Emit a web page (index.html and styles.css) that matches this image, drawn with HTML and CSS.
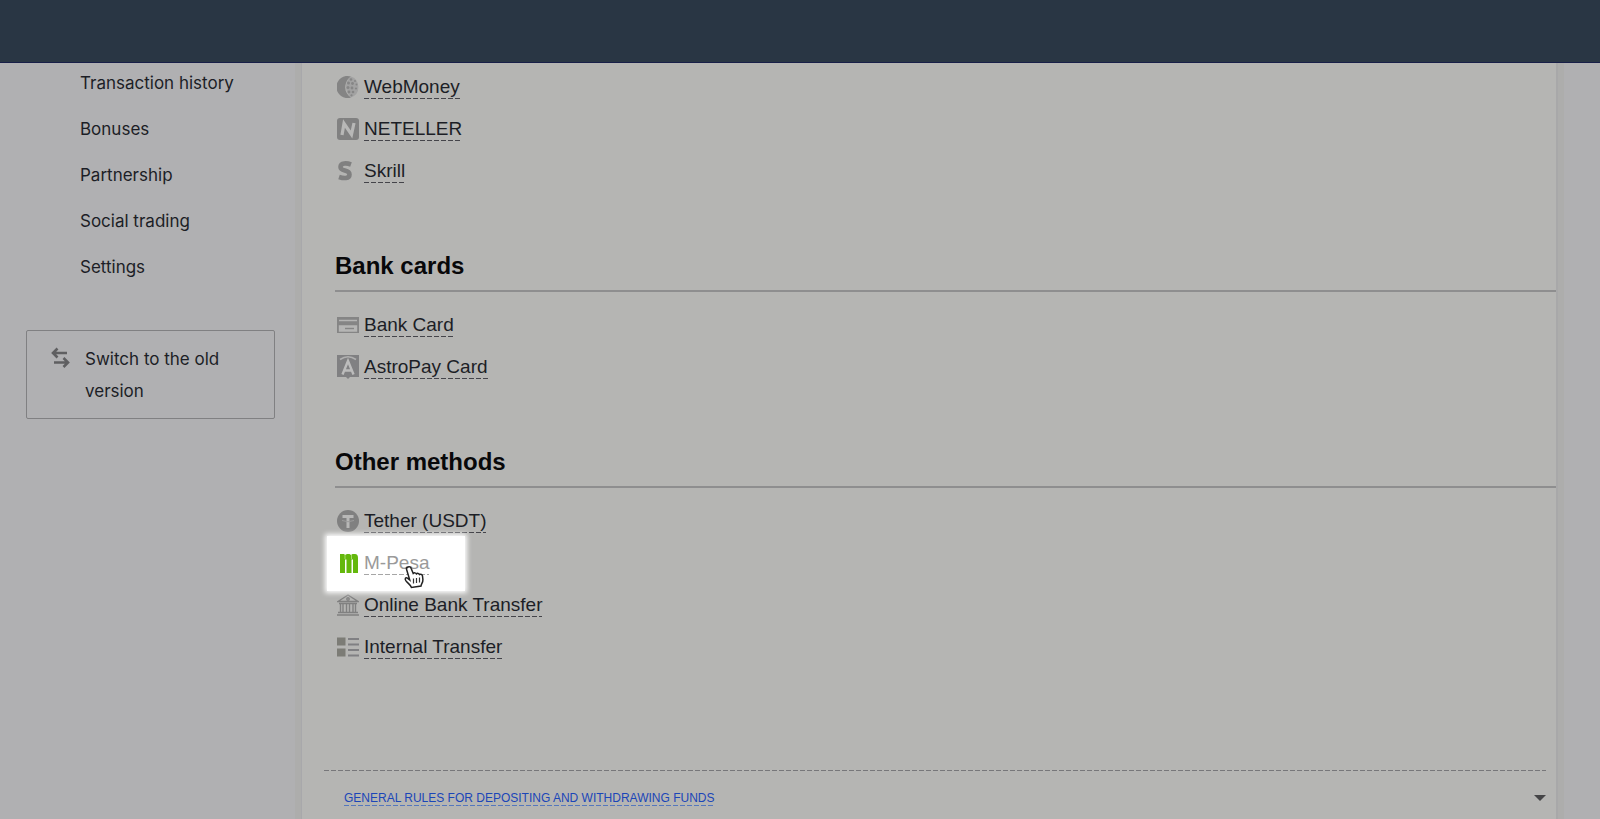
FILE: index.html
```html
<!DOCTYPE html>
<html lang="en">
<head>
<meta charset="UTF-8">
<meta name="viewport" content="width=device-width, initial-scale=1.0">
<title>Deposit</title>
<link rel="stylesheet" href="styles.css">
</head>
<body>

<header class="topbar"></header>

<div class="page">
    <aside class="sidebar">
        <nav>
            <ul class="menu">
                <li><a href="#">Transaction history</a></li>
                <li><a href="#">Bonuses</a></li>
                <li><a href="#">Partnership</a></li>
                <li><a href="#">Social trading</a></li>
                <li><a href="#">Settings</a></li>
            </ul>
        </nav>
        <button class="switch" type="button">
            <svg width="20" height="22" viewBox="0 0 20 22" fill="none" stroke="#5f5f61" stroke-width="2.6"><path d="M16 6H2M6.500 1.500L2 6l4.500 4.500M3 15.500h14M12.500 11l4.500 4.500-4.500 4.500"/></svg>
            <span>Switch to the old version</span>
        </button>
    </aside>

    <main class="content">
        <section class="group">
            <ul class="methods">
                <li>
                    <svg width="22" height="22" viewBox="0 0 22 22"><path d="M14 .6A11 11 0 1 0 14 21.400C9 18 7 13 9 7c1-3 3-5 5-6.400z" fill="#848484"/><path d="M14 .6C9 4 6 14 14 21.400A11 11 0 0 0 14 .6z" fill="#a2a2a2"/><g fill="#868686"><circle cx="14" cy="3.500" r="1.300"/><circle cx="18" cy="5" r="1"/><circle cx="11.500" cy="7" r="1.500"/><circle cx="15.500" cy="7.500" r="1.400"/><circle cx="19.500" cy="8.500" r="1"/><circle cx="11" cy="11.500" r="1.500"/><circle cx="15" cy="12" r="1.400"/><circle cx="19" cy="12.500" r="1.100"/><circle cx="12" cy="16" r="1.400"/><circle cx="16" cy="16" r="1.300"/><circle cx="14.500" cy="19.300" r="1.100"/></g></svg>
                    <a href="#">WebMoney</a>
                </li>
                <li>
                    <svg width="22" height="22" viewBox="0 0 22 22"><rect width="22" height="22" rx="3" fill="#818181"/><path d="M5 17L7 5.500l7.500 11L17 5" fill="none" stroke="#b8b8b7" stroke-width="3.200"/></svg>
                    <a href="#">NETELLER</a>
                </li>
                <li>
                    <svg width="22" height="22" viewBox="0 0 22 22"><path d="M14 4.500C10 3 3.500 2.500 3.500 7c0 5 9 2 9 7.500 0 4.500-6 4-10.500 2.500" fill="none" stroke="#808080" stroke-width="4.600"/></svg>
                    <a href="#">Skrill</a>
                </li>
            </ul>
        </section>

        <section class="group">
            <h2>Bank cards</h2>
            <ul class="methods">
                <li>
                    <svg width="22" height="22" viewBox="0 0 22 22"><rect y="3" width="22" height="16" fill="#858585"/><path d="M2 6.500h18M2.500 12h17v5h-17z" stroke="#b5b5b4" stroke-width="1.400" fill="#b5b5b4"/><path d="M8 14.500h9" stroke="#858585" stroke-width="1.400"/></svg>
                    <a href="#">Bank Card</a>
                </li>
                <li>
                    <svg width="22" height="24" viewBox="0 0 22 24"><path d="M0 0h22v22h-9l-2 2-2-2H0z" fill="#808082"/><path d="M3 4.500Q11-1 19 4.500" fill="none" stroke="#b0b0b0" stroke-width="1.600"/><path d="M5.500 19.500L11 6l5.500 13.500M7.500 15.500h7" fill="none" stroke="#bcbcbc" stroke-width="2.400"/></svg>
                    <a href="#">AstroPay Card</a>
                </li>
            </ul>
        </section>

        <section class="group">
            <h2>Other methods</h2>
            <ul class="methods">
                <li>
                    <svg width="22" height="22" viewBox="0 0 22 22"><circle cx="11" cy="11" r="11" fill="#808080"/><path d="M5.500 6.500h11M11 6v12" stroke="#b8b8b7" stroke-width="3"/><path d="M5 10.500q6 2.500 12 0" fill="none" stroke="#9c9c9c"/></svg>
                    <a href="#">Tether (USDT)</a>
                </li>
                <li class="active">
                    <svg width="22" height="22" viewBox="0 0 22 22"><path d="M3 2h4l1 1 2-1h2.500l1.500 1 1.500-1H18q3 0 3 4v15h-5V7.500h-1.500V21h-5V7.500H8V21H3z" fill="#64b80c"/><path d="M8 3v4M14.500 3v4" stroke="#a5da68" stroke-width="1"/></svg>
                    <a href="#">M-Pesa</a>
                    <svg class="cursor" width="22" height="24" viewBox="0 0 22 24"><path d="M5 2c1.500-.8 2.700 0 3.200 1.500l2 5c1-1 2.600-.8 3.200.4 1-.9 2.500-.6 3.100.6 1.300-.7 2.700 0 3 1.500l.4 3.500c.2 3-1.500 4-1.900 6.500l-9.500 1.500c-.7-2.500-3.600-4-5.700-6.900-1.300-2-.2-3.500 1.700-2.500l2.200 1.800L3.600 4.500C3.200 3.400 3.900 2.400 5 2z" fill="#fff" stroke="#222" stroke-width="1.500"/><path d="M10.500 13.500v5M13.500 13v5M16.500 12.500v5" stroke="#333" stroke-width="1.200"/></svg>
                </li>
                <li>
                    <svg width="22" height="22" viewBox="0 0 22 22" fill="none" stroke="#808080" stroke-width="1.400"><path d="M1 7.500L11 1l10 6.500zM2 9.500h18M1 18.500h20M0 21h22M3.500 9.500v9M6 9.500v9M9.500 9.500v9M12.500 9.500v9M16 9.500v9M18.500 9.500v9"/><circle cx="11" cy="5" r="1.200"/></svg>
                    <a href="#">Online Bank Transfer</a>
                </li>
                <li>
                    <svg width="22" height="22" viewBox="0 0 22 22"><path d="M0 1.500h8.500v8H0zM0 12.500h8.500v8H0z" fill="#7c7c76"/><path d="M11 3h11M11 8.500h11M11 14h11M11 19.500h11" stroke="#808083" stroke-width="2"/></svg>
                    <a href="#">Internal Transfer</a>
                </li>
            </ul>
        </section>

        <div class="rules">
            <a href="#">GENERAL RULES FOR DEPOSITING AND WITHDRAWING FUNDS</a>
            <svg width="12" height="6" viewBox="0 0 12 6"><path d="M0 0h12L6 6z" fill="#454547"/></svg>
        </div>
    </main>
</div>

</body>
</html>
```
FILE: styles.css
```css
* {
  box-sizing: border-box;
}
body {
  margin: 0;
  min-height: 100vh;
  display: flex;
  flex-direction: column;
  background-color: #b0b0b2;
  color: #1c1e26;
  font-family: "Liberation Sans", Arial, sans-serif;
}
ul {
  margin: 0;
  padding: 0;
  list-style: none;
}
a {
  color: inherit;
  text-decoration: none;
}
.topbar {
  height: 63px;
  background-color: #293644;
  border-bottom: 1px solid #181f48;
}
.page {
  flex: 1;
  display: flex;
}

/* sidebar */
.sidebar {
  width: 301px;
  padding: 0 26px;
  border-right: 6px solid #adadac;
  font-family: Inter, sans-serif;
  font-size: 17px;
}
.menu {
  display: flex;
  flex-direction: column;
  gap: 6px;
  padding-left: 54px;
}
.menu a {
  display: block;
  line-height: 40px;
}
.switch {
  display: flex;
  gap: 14px;
  width: 249px;
  margin-top: 43px;
  padding: 12px 24px 11px;
  background: none;
  border: 1px solid #808082;
  border-radius: 2px;
  color: inherit;
  font: inherit;
  line-height: 32px;
  text-align: left;
}
.switch svg {
  flex: none;
  margin-top: 4px;
}

/* payment methods */
.content {
  flex: 1;
  margin-right: 42px;
  padding-top: 3px;
  background-color: #b5b5b3;
  border-left: 1px solid #a8a8ab;
  border-right: 2px solid #a8a8a9;
  box-shadow: 6px 0 0 #adadac;
}
.group {
  padding-left: 33px;
}
.group h2 {
  margin: 0 0 12px;
  padding: 54px 0 4px;
  border-bottom: 2px solid #8e8e8f;
  color: #08080a;
  font-size: 24px;
  line-height: 40px;
}
.methods li {
  position: relative;
  display: flex;
  align-items: center;
  gap: 5px;
  height: 42px;
  padding-left: 2px;
  font-size: 19px;
}
.methods a {
  line-height: 24px;
  background: repeating-linear-gradient(90deg, #44444a 0 5px, transparent 5px 7px) left bottom / 100% 1px no-repeat;
}
.methods .active {
  z-index: 1;
  color: #9a9a9a;
}
.active::before {
  content: "";
  position: absolute;
  z-index: -1;
  top: -6px;
  left: -8px;
  width: 138px;
  height: 55px;
  background-color: #fff;
  box-shadow: 0 0 5px 2px #fff;
}
.methods .active a {
  background-image: repeating-linear-gradient(90deg, #a6a6a6 0 5px, transparent 5px 7px);
}
.cursor {
  position: absolute;
  left: 68px;
  top: 23px;
}

.rules {
  display: flex;
  align-items: center;
  justify-content: space-between;
  margin: 102px 10px 0 22px;
  padding: 20px 0 0 20px;
  background: repeating-linear-gradient(90deg, #77777a 0 5px, transparent 5px 7px) left top / 100% 1px no-repeat;
  color: #1b46b8;
  font-size: 12px;
}
.rules a {
  line-height: 16px;
  background: repeating-linear-gradient(90deg, #5577bd 0 5px, transparent 5px 7px) left bottom / 100% 1px no-repeat;
}
```
